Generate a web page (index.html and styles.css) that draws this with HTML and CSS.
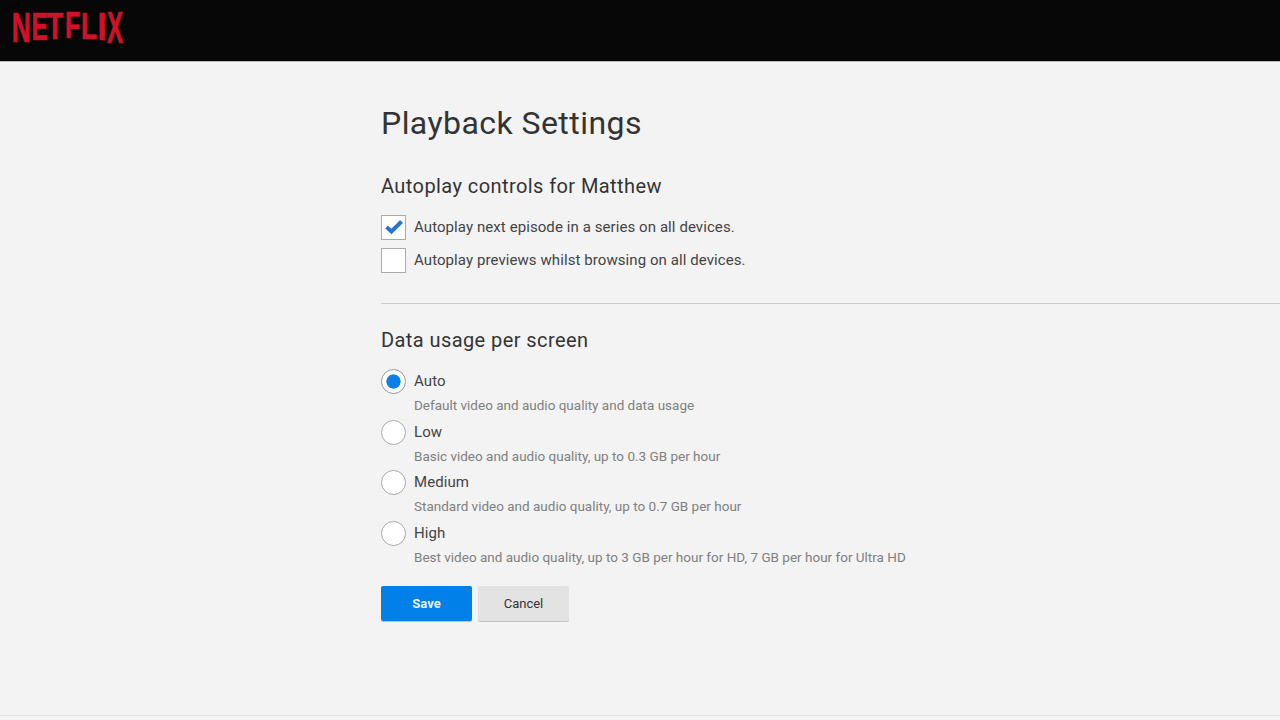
FILE: index.html
```html
<!DOCTYPE html>
<html lang="en">

<head>
  <meta charset="UTF-8">
  <title>Playback Settings</title>
  <link rel="stylesheet" href="styles.css">
</head>

<body>

  <header class="top-bar">
    <svg class="logo" width="112" height="32" viewBox="0 0 112 32" role="img" aria-label="Netflix">
      <g class="logo-text">
        <text transform="translate(-1.2 29) scale(0.88 1.41)">N</text>
        <text transform="translate(18.5 27) scale(0.82 1.31)">E</text>
        <text transform="translate(33.5 25.5) scale(0.92 1.24)">T</text>
        <text transform="translate(52 25) scale(0.84 1.21)">F</text>
        <text transform="translate(68 25.5) scale(0.88 1.24)">L</text>
        <text transform="translate(84.5 27) scale(1.1 1.31)">I</text>
        <text transform="translate(94 30) scale(0.8 1.45)">X</text>
      </g>
    </svg>
  </header>

  <main class="content">
    <h1>Playback Settings</h1>

    <section class="group autoplay">
      <h2>Autoplay controls for Matthew</h2>
      <label class="check-row">
        <span class="box">
          <svg width="20" height="16" viewBox="0 0 20 16">
            <path d="M2.5 8 L7.5 12.5 L17.5 2.5" fill="none" stroke="#2177d0" stroke-width="4" />
          </svg>
        </span>
        Autoplay next episode in a series on all devices.
      </label>
      <label class="check-row">
        <span class="box"></span>
        Autoplay previews whilst browsing on all devices.
      </label>
    </section>

    <hr class="divider">

    <section class="group">
      <h2>Data usage per screen</h2>

      <div class="radio-row">
        <span class="radio selected"></span>
        <div class="radio-label">Auto</div>
        <div class="radio-desc">Default video and audio quality and data usage</div>
      </div>
      <div class="radio-row">
        <span class="radio"></span>
        <div class="radio-label">Low</div>
        <div class="radio-desc">Basic video and audio quality, up to 0.3 GB per hour</div>
      </div>
      <div class="radio-row">
        <span class="radio"></span>
        <div class="radio-label">Medium</div>
        <div class="radio-desc">Standard video and audio quality, up to 0.7 GB per hour</div>
      </div>
      <div class="radio-row">
        <span class="radio"></span>
        <div class="radio-label">High</div>
        <div class="radio-desc">Best video and audio quality, up to 3 GB per hour for HD, 7 GB per hour for Ultra HD</div>
      </div>
    </section>

    <div class="actions">
      <button class="btn btn-save">Save</button>
      <button class="btn btn-cancel">Cancel</button>
    </div>
  </main>

  <footer class="bottom-line"></footer>

</body>

</html>
```

FILE: styles.css
```css
html,
body {
  height: 100%;
}

body {
  margin: 0;
  height: 720px;
  overflow: hidden;
  display: flex;
  flex-direction: column;
  font-family: Roboto, "Liberation Sans", sans-serif;
  background-color: #f3f3f3;
  color: #333;
}

.top-bar {
  box-sizing: border-box;
  height: 62px;
  flex-shrink: 0;
  padding: 13px 0 0 13px;
  background: #060606;
  border-bottom: 1px solid #bbb;
}

.logo {
  display: block;
  overflow: visible;
}

.logo-text {
  font-family: "Liberation Sans", sans-serif;
  font-weight: 700;
  font-size: 30px;
  fill: #cf1229;
  stroke: #cf1229;
  stroke-width: 0.5px;
}

.content {
  flex: 1;
  padding: 0 0 0 381px;
}

h1 {
  margin: 42px 0 0;
  font-size: 32px;
  line-height: 38px;
  font-weight: 400;
  letter-spacing: 0.44px;
}

h2 {
  margin: 0;
  font-size: 20px;
  line-height: 24px;
  font-weight: 400;
  letter-spacing: 0.42px;
}

.autoplay {
  margin-top: 32px;
}

.check-row {
  display: flex;
  align-items: center;
  gap: 8px;
  height: 26px;
  margin-top: 7px;
  font-size: 15px;
  letter-spacing: 0.08px;
  color: #444;
}

.autoplay h2 + .check-row {
  margin-top: 16px;
}

.box {
  box-sizing: border-box;
  width: 25px;
  height: 25px;
  display: flex;
  align-items: center;
  justify-content: center;
  background: #fff;
  border: 1px solid #aaa;
}

.divider {
  margin: 30px 0 24px;
  border: 0;
  border-top: 1px solid #ccc;
}

.radio-row {
  display: grid;
  grid-template-columns: 25px 1fr;
  align-content: start;
  column-gap: 8px;
  height: 50.5px;
  font-size: 15px;
}

.group h2 + .radio-row {
  margin-top: 17px;
}

.radio {
  box-sizing: border-box;
  width: 25px;
  height: 25px;
  background: #fff;
  border: 1px solid #aaa;
  border-radius: 50%;
}

.radio.selected {
  background: radial-gradient(circle, #0f7fe8 0 6.8px, #fff 7.4px);
  border-color: #999;
}

.radio-label {
  line-height: 25px;
  letter-spacing: 0.08px;
  color: #444;
}

.radio-desc {
  grid-column: 2;
  font-size: 13.5px;
  line-height: 22px;
  color: #808080;
}

.actions {
  display: flex;
  gap: 6px;
  margin-top: 15px;
}

.btn {
  width: 91px;
  height: 35px;
  padding: 0;
  border: none;
  border-radius: 2px;
  font-family: inherit;
  font-size: 13px;
  cursor: pointer;
}

.btn-save {
  background: #0280ea;
  color: #e8f4ff;
  font-weight: 700;
  box-shadow: 0 1px 0 rgba(0, 0, 0, 0.2);
}

.btn-cancel {
  background: #e3e3e3;
  color: #333;
  box-shadow: 0 1px 0 rgba(0, 0, 0, 0.2);
}

.bottom-line {
  height: 4px;
  flex-shrink: 0;
  border-top: 1px solid #e4e4e4;
}
```
